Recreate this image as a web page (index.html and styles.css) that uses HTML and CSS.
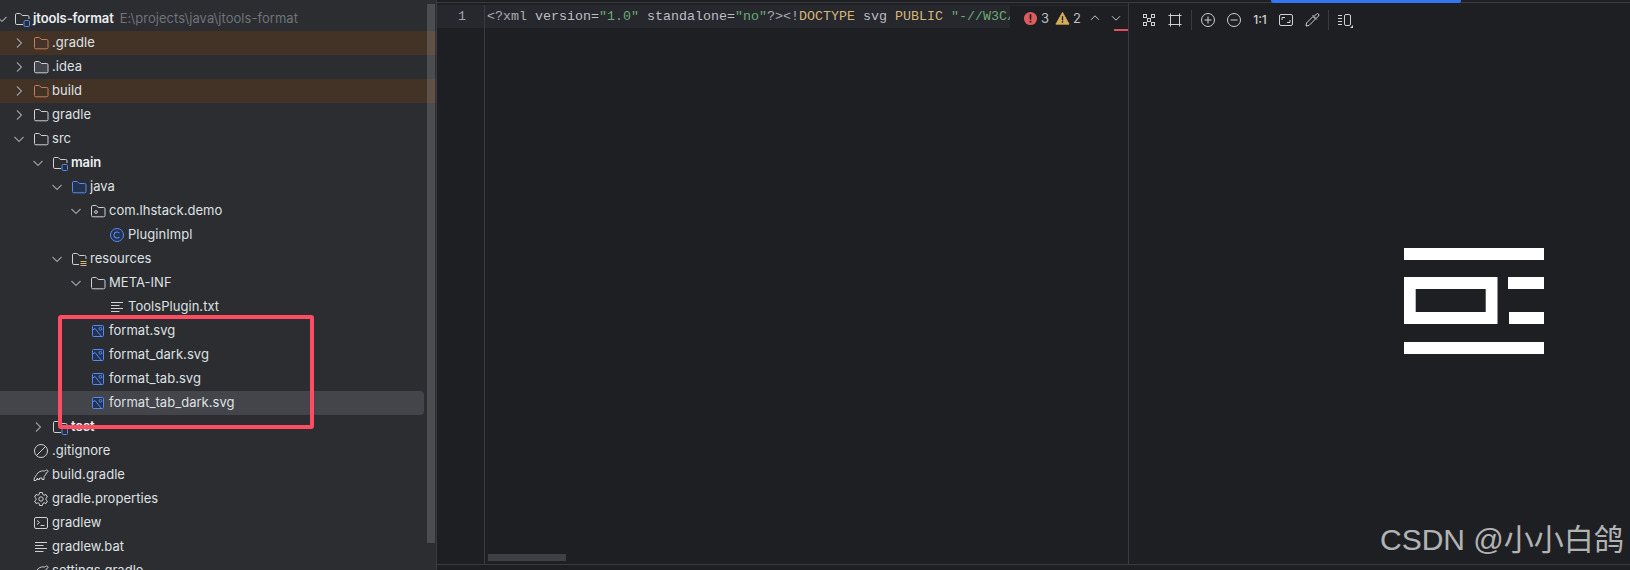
FILE: index.html
```html
<!DOCTYPE html>
<html lang="en">
<head>
<meta charset="utf-8">
<title>jtools-format</title>
<link rel="stylesheet" href="styles.css">
</head>
<body>
<svg class="defs" aria-hidden="true">
  <symbol id="chev-r" viewBox="0 0 16 16"><path d="M6 3.5 10.5 8 6 12.5" fill="none" stroke="currentColor" stroke-width="1.1"/></symbol>
  <symbol id="chev-d" viewBox="0 0 16 16"><path d="M3.5 6 8 10.5 12.5 6" fill="none" stroke="currentColor" stroke-width="1.1"/></symbol>
  <symbol id="folder" viewBox="0 0 16 16"><path d="M1.5 12.5V3.8a1.3 1.3 0 0 1 1.3-1.3h3.1a1 1 0 0 1 .7.3l1.7 1.7h5.4a1.3 1.3 0 0 1 1.3 1.3v6.7a1.3 1.3 0 0 1-1.3 1.3H2.8a1.3 1.3 0 0 1-1.3-1.3z"/></symbol>
  <symbol id="module" viewBox="0 0 16 16"><path d="M9 13.5H2.8a1.3 1.3 0 0 1-1.3-1.3V3.8a1.3 1.3 0 0 1 1.3-1.3h3.1a1 1 0 0 1 .7.3l1.7 1.7h5.4a1.3 1.3 0 0 1 1.3 1.3V8" fill="none" stroke="#ced0d6"/><rect x="10" y="9.500" width="5.500" height="6" rx="1.200" fill="none" stroke="#548af7"/></symbol>
  <symbol id="resources" viewBox="0 0 16 16"><path d="M8 13.500H2.800a1.300 1.300 0 0 1-1.300-1.300V3.800a1.300 1.300 0 0 1 1.300-1.300h3.100a1 1 0 0 1 .7.3l1.700 1.700h5.400a1.300 1.300 0 0 1 1.300 1.300V8" fill="none" stroke="#ced0d6"/><path d="M9.500 10.500h6M9.500 12.500h6M9.500 14.500h6" fill="none" stroke="#d5b778"/></symbol>
  <symbol id="package" viewBox="0 0 16 16"><path d="M1.500 12.500V3.800a1.300 1.300 0 0 1 1.300-1.300h3.100a1 1 0 0 1 .7.3l1.700 1.700h5.400a1.300 1.300 0 0 1 1.300 1.300v6.700a1.300 1.300 0 0 1-1.300 1.300H2.800a1.300 1.300 0 0 1-1.300-1.300z" fill="none" stroke="#ced0d6"/><circle cx="6" cy="9" r="1.400" fill="none" stroke="#ced0d6"/></symbol>
  <symbol id="class" viewBox="0 0 16 16"><circle cx="8" cy="8" r="6.500" fill="#25324d" stroke="#548af7"/><path d="M10.400 6.200A3 3 0 1 0 10.400 9.800" fill="none" stroke="#548af7" stroke-width="1.100"/></symbol>
  <symbol id="lines" viewBox="0 0 16 16"><path d="M2 3.500h12M2 6.500h8.500M2 9.500h12M2 12.500h8.500" fill="none" stroke="#ced0d6"/></symbol>
  <symbol id="image" viewBox="0 0 16 16"><rect x="2.500" y="2.500" width="11" height="11" rx="1" fill="#25324d" stroke="#548af7"/><path d="M2.500 7 5 5.500 11.500 13.500" fill="none" stroke="#548af7"/><circle cx="10.500" cy="5.800" r="1.400" fill="none" stroke="#548af7"/></symbol>
  <symbol id="ignore" viewBox="0 0 16 16"><circle cx="8" cy="8" r="6.500" fill="none" stroke="#ced0d6"/><path d="M3.500 12.500 12.500 3.500" stroke="#ced0d6" fill="none"/></symbol>
  <symbol id="elephant" viewBox="0 0 16 16"><path d="M1 13.500c0-2 .8-3.300 1.700-4.300C3.800 7 5.500 4.500 8.500 4c2-.3 3 .5 4-.5 1-.8 2.500-.5 2.500.8 0 1-1 1.400-1.700 1.500-.3 2-1.300 3-2.300 3.700v3h-2V11H6.500v1.500h-2V11L3 13.500z" fill="none" stroke="#ced0d6" stroke-linejoin="round"/></symbol>
  <symbol id="gear" viewBox="0 0 16 16"><path d="M6.600 1.500h2.800l.4 2 1.300.7 1.900-.7 1.400 2.500-1.500 1.300v1.400l1.500 1.300-1.400 2.500-1.900-.7-1.300.7-.4 2H6.600l-.4-2-1.300-.7-1.900.7-1.400-2.500L3.100 8.700V7.300L1.600 6l1.400-2.500 1.900.7 1.300-.7z" fill="none" stroke="#ced0d6" stroke-linejoin="round"/><circle cx="8" cy="8" r="2.200" fill="none" stroke="#ced0d6"/></symbol>
  <symbol id="terminal" viewBox="0 0 16 16"><rect x="1.500" y="2.500" width="13" height="11" rx="1.500" fill="none" stroke="#ced0d6"/><path d="M4 5.500 6.500 7.500 4 9.500M7.500 10.500h4" fill="none" stroke="#ced0d6"/></symbol>
</svg>

<div class="app">
  <aside class="sidebar">
    <div class="row l0"><svg class="chev"><use href="#chev-d"/></svg><svg class="ico"><use href="#module"/></svg><span class="name strong">jtools-format</span><span class="name path">E:\projects\java\jtools-format</span></div>
    <div class="row l1 ignored"><svg class="chev"><use href="#chev-r"/></svg><svg class="ico f-orange-filled"><use href="#folder"/></svg><span class="name">.gradle</span></div>
    <div class="row l1"><svg class="chev"><use href="#chev-r"/></svg><svg class="ico f-filled"><use href="#folder"/></svg><span class="name">.idea</span></div>
    <div class="row l1 ignored"><svg class="chev"><use href="#chev-r"/></svg><svg class="ico f-orange"><use href="#folder"/></svg><span class="name">build</span></div>
    <div class="row l1"><svg class="chev"><use href="#chev-r"/></svg><svg class="ico f-plain"><use href="#folder"/></svg><span class="name">gradle</span></div>
    <div class="row l1"><svg class="chev"><use href="#chev-d"/></svg><svg class="ico f-plain"><use href="#folder"/></svg><span class="name">src</span></div>
    <div class="row l2"><svg class="chev"><use href="#chev-d"/></svg><svg class="ico"><use href="#module"/></svg><span class="name strong">main</span></div>
    <div class="row l3"><svg class="chev"><use href="#chev-d"/></svg><svg class="ico f-blue"><use href="#folder"/></svg><span class="name">java</span></div>
    <div class="row l4"><svg class="chev"><use href="#chev-d"/></svg><svg class="ico"><use href="#package"/></svg><span class="name">com.lhstack.demo</span></div>
    <div class="row l5 leaf"><svg class="ico"><use href="#class"/></svg><span class="name">PluginImpl</span></div>
    <div class="row l3"><svg class="chev"><use href="#chev-d"/></svg><svg class="ico"><use href="#resources"/></svg><span class="name">resources</span></div>
    <div class="row l4"><svg class="chev"><use href="#chev-d"/></svg><svg class="ico f-plain"><use href="#folder"/></svg><span class="name">META-INF</span></div>
    <div class="row l5 leaf"><svg class="ico"><use href="#lines"/></svg><span class="name">ToolsPlugin.txt</span></div>
    <div class="row l4 leaf"><svg class="ico"><use href="#image"/></svg><span class="name">format.svg</span></div>
    <div class="row l4 leaf"><svg class="ico"><use href="#image"/></svg><span class="name">format_dark.svg</span></div>
    <div class="row l4 leaf"><svg class="ico"><use href="#image"/></svg><span class="name">format_tab.svg</span></div>
    <div class="row l4 leaf selected"><svg class="ico"><use href="#image"/></svg><span class="name">format_tab_dark.svg</span></div>
    <div class="row l2"><svg class="chev"><use href="#chev-r"/></svg><svg class="ico"><use href="#module"/></svg><span class="name strong">test</span></div>
    <div class="row l1 leaf"><svg class="ico"><use href="#ignore"/></svg><span class="name">.gitignore</span></div>
    <div class="row l1 leaf"><svg class="ico"><use href="#elephant"/></svg><span class="name">build.gradle</span></div>
    <div class="row l1 leaf"><svg class="ico"><use href="#gear"/></svg><span class="name">gradle.properties</span></div>
    <div class="row l1 leaf"><svg class="ico"><use href="#terminal"/></svg><span class="name">gradlew</span></div>
    <div class="row l1 leaf"><svg class="ico"><use href="#lines"/></svg><span class="name">gradlew.bat</span></div>
    <div class="row l1 leaf"><svg class="ico"><use href="#elephant"/></svg><span class="name">settings.gradle</span></div>
    <div class="scrollbar"></div>
    <div class="callout"></div>
  </aside>

  <div class="work">
    <main class="editor">
      <div class="line">
        <div class="gutter">1</div>
        <code class="code"><span class="c-mute">&lt;?xml</span> version=<span class="c-str">"1.0"</span> standalone=<span class="c-str">"no"</span><span class="c-mute">?&gt;&lt;!</span><span class="c-tag">DOCTYPE</span> svg <span class="c-tag">PUBLIC</span> <span class="c-str">"-//W3C//</span></code>
      </div>
      <div class="gutter-fill"></div>
      <div class="badge">
        <svg class="b-ico" viewBox="0 0 16 16"><circle cx="8" cy="8" r="7" fill="#db5c5c"/><path d="M8 3.500v5.500M8 10.500v1.800" stroke="#1e1f22" stroke-width="1.800"/></svg><span class="b-num">3</span>
        <svg class="b-ico b-warn" viewBox="0 0 16 16"><path d="M8 1.500 15 14H1z" fill="#d6ae58" stroke="#d6ae58" stroke-linejoin="round"/><path d="M8 5.500v4.500M8 11v1.500" stroke="#1e1f22" stroke-width="1.500"/></svg><span class="b-num">2</span>
        <svg class="b-chev b-up" viewBox="0 0 16 16"><path d="M3.500 10 8 5.500 12.500 10" fill="none" stroke="#ced0d6" stroke-width="1.100"/></svg>
        <svg class="b-chev" viewBox="0 0 16 16"><path d="M3.500 6 8 10.500 12.500 6" fill="none" stroke="#ced0d6" stroke-width="1.100"/></svg>
      </div>
      <div class="errmark"></div>
      <div class="hscroll"></div>
    </main>

    <section class="viewer">
      <div class="progress"></div>
      <div class="toolbar">
        <svg class="t-ico" viewBox="0 0 16 16"><g fill="none" stroke="#ced0d6"><rect x="2.500" y="2.500" width="3" height="3"/><rect x="10.500" y="2.500" width="3" height="3"/><rect x="2.500" y="10.500" width="3" height="3"/><rect x="10.500" y="10.500" width="3" height="3"/><rect x="6.500" y="6.500" width="3" height="3"/></g></svg>
        <svg class="t-ico" viewBox="0 0 16 16"><path d="M3.500 1.500v13M12.500 1.500v13M1.500 3.500h13M1.500 12.500h13" fill="none" stroke="#ced0d6"/></svg>
        <span class="t-sep"></span>
        <svg class="t-ico" viewBox="0 0 16 16"><circle cx="8" cy="8" r="6.500" fill="none" stroke="#ced0d6"/><path d="M4.500 8h7M8 4.500v7" fill="none" stroke="#ced0d6"/></svg>
        <svg class="t-ico" viewBox="0 0 16 16"><circle cx="8" cy="8" r="6.500" fill="none" stroke="#ced0d6"/><path d="M4.500 8h7" fill="none" stroke="#ced0d6"/></svg>
        <span class="t-text">1:1</span>
        <svg class="t-ico" viewBox="0 0 16 16"><rect x="1.500" y="2.500" width="13" height="11" rx="1.500" fill="none" stroke="#ced0d6"/><path d="M4 8V5.500h3M12 8v2.500H9" fill="none" stroke="#ced0d6"/></svg>
        <svg class="t-ico" viewBox="0 0 16 16"><path d="M2 14l.5-3L9 4.500l2.500 2.500L5 13.500zM8.500 3l4.500 4.500M10.500 4l2-2a1.400 1.400 0 0 1 2 2l-2 2" fill="none" stroke="#ced0d6" stroke-linejoin="round"/></svg>
        <span class="t-sep"></span>
        <svg class="t-ico" viewBox="0 0 16 16"><path d="M1 3.500h4M1 6.500h4M1 9.500h4M1 12.500h4" fill="none" stroke="#ced0d6"/><rect x="7.500" y="2.500" width="6" height="11" rx="1.500" fill="none" stroke="#ced0d6"/><path d="M13 16h3v-3z" fill="#ced0d6"/></svg>
      </div>
      <svg class="picture" viewBox="0 0 140 106" aria-label="format icon">
        <path fill="#fff" d="M0 0h140v12H0zM0 94h140v12H0zM104 29h36v12h-36zM105 64h35v12h-35z"/>
        <path fill="#fff" fill-rule="evenodd" d="M0 29h93.500v47H0zM11.700 41v23h70V41z"/>
      </svg>
    </section>
  </div>
  <div class="watermark">CSDN @小小白鸽</div>
</div>
</body>
</html>
```
FILE: styles.css
```css
* { box-sizing: border-box; }
html, body { margin: 0; height: 570px; overflow: hidden; background: #1e1f22; }
.defs { position: absolute; width: 0; height: 0; }

.app { position: relative; display: flex; width: 1630px; height: 570px; overflow: hidden; }

/* project tree */
.sidebar {
  position: relative; flex: 0 0 437px; height: 570px; padding-top: 7px;
  background: #2b2d30; border-right: 1px solid #393b40; overflow: hidden;
  font: 13px/23px Inter, "Noto Sans", sans-serif; color: #dfe1e5;
}
.row { display: flex; align-items: flex-start; height: 24px; white-space: nowrap; }
.l0 { padding-left: 0; }
.l1 { padding-left: 11px; }
.l2 { padding-left: 30px; }
.l3 { padding-left: 49px; }
.l4 { padding-left: 68px; }
.l5 { padding-left: 87px; }
.l0 .chev { margin-left: -6px; margin-right: 4px; }
.chev, .ico { margin-top: 4px; }
.chev { flex: none; width: 16px; height: 16px; margin-right: 6px; color: #9a9da4; }
.ico { flex: none; width: 16px; height: 16px; margin-right: 3px; fill: none; stroke: none; }
.leaf .ico { margin-left: 22px; }
.name { letter-spacing: .04px; }
.strong { font-weight: 600; color: #eceef2; letter-spacing: -.1px; }
.path { margin-left: 6px; color: #6f737a; }
.ignored { background: #433327; }
.selected { background: #43454a; width: 424px; border-radius: 0 4px 4px 0; }

.f-plain { fill: none; stroke: #ced0d6; }
.f-filled { fill: #43454a; stroke: #ced0d6; }
.f-orange { fill: none; stroke: #c77d55; }
.f-orange-filled { fill: #45322b; stroke: #c77d55; }
.f-blue { fill: #25324d; stroke: #548af7; }

.scrollbar {
  position: absolute; left: 427px; top: 4px; width: 8px; height: 539px;
  background: rgba(223, 225, 229, .18);
}
.callout {
  position: absolute; left: 58px; top: 315px; width: 256px; height: 114px;
  border: 4px solid #fe4d62; border-radius: 3px;
}

/* right area */
.work {
  display: flex; flex: 1; height: 563px; margin-top: 2px;
  border-top: 1px solid #393b40; border-bottom: 1px solid #393b40;
}

.editor { position: relative; flex: 0 0 692px; overflow: hidden; border-right: 1px solid #393b40; }
.line {
  display: flex; height: 23px; margin-top: 2px; background: #26282e;
  font: 13.33px/23px "Liberation Mono", "DejaVu Sans Mono", monospace; white-space: nowrap;
}
.gutter { flex: none; width: 48px; padding-right: 18px; text-align: right; color: #a1a3ab; border-right: 1px solid #393b40; }
.code { padding-left: 2px; font: inherit; color: #bcbec4; }
.c-mute { color: #a9abb2; }
.c-str { color: #6aab73; }
.c-tag { color: #d5b778; }
.gutter-fill { position: absolute; left: 47px; top: 25px; bottom: 0; width: 1px; background: #393b40; }

.badge {
  position: absolute; right: 0; top: 3px; display: flex; align-items: center; height: 24px;
  padding: 0 5px 0 13px; background: #1e1f22;
  font: 13px/24px Inter, sans-serif; color: #bcbec4;
}
.b-ico { width: 15px; height: 15px; margin-right: 3px; }
.b-warn { margin-left: 5px; }
.b-num { width: 9px; }
.b-chev { width: 14px; height: 14px; margin-left: 7px; }
.b-up { margin-left: 6px; }
.errmark { position: absolute; right: 0; top: 26px; width: 14px; height: 2px; background: #e0515f; }
.hscroll { position: absolute; left: 51px; top: 551px; width: 78px; height: 7px; background: #3e4045; }

.viewer { position: relative; flex: 1; }
.progress { position: absolute; left: 142px; top: -3px; width: 190px; height: 3px; background: #3574f0; border-radius: 0 0 2px 2px; }
.toolbar { display: flex; align-items: center; gap: 10px; height: 34px; padding-left: 12px; color: #ced0d6; }
.t-ico { flex: none; width: 16px; height: 16px; }
.t-sep { flex: none; width: 1px; height: 20px; margin: 0 -2px 0 -2px; background: #393b40; }
.t-text { flex: none; width: 16px; font: 500 12px/16px Inter, sans-serif; text-align: center; }
.picture { display: block; width: 140px; height: 106px; margin: 211px 0 0 275px; }

.watermark {
  position: absolute; left: 1380px; top: 517px; white-space: nowrap;
  font: 30px/46px "Liberation Sans", "Noto Sans CJK SC", sans-serif; color: rgba(255,255,255,.68);
}
```
